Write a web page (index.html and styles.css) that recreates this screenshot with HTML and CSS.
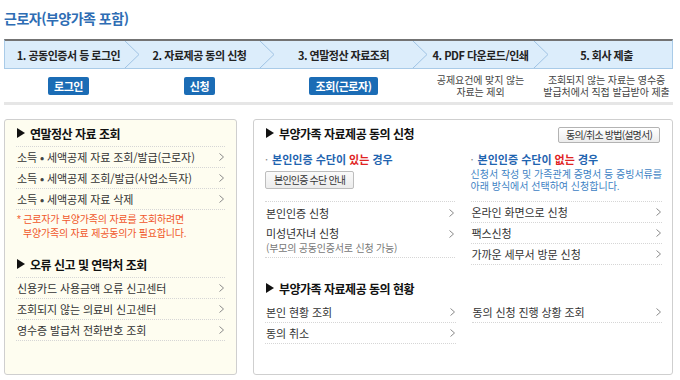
FILE: index.html
```html
<!DOCTYPE html>
<html lang="ko">
<head>
<meta charset="utf-8">
<title>근로자(부양가족 포함)</title>
<link rel="stylesheet" href="styles.css">
</head>
<body>
<div class="page">
  <h1 class="title">근로자(부양가족 포함)</h1>

  <div class="steps">
    <div class="step">1. 공동인증서 등 로그인<svg class="chev" viewBox="0 0 16 28" preserveAspectRatio="none"><polyline points="0,-1 15,14 0,29"/></svg></div>
    <div class="step">2. 자료제공 동의 신청<svg class="chev" viewBox="0 0 16 28" preserveAspectRatio="none"><polyline points="0,-1 15,14 0,29"/></svg></div>
    <div class="step">3. 연말정산 자료조회<svg class="chev" viewBox="0 0 16 28" preserveAspectRatio="none"><polyline points="0,-1 15,14 0,29"/></svg></div>
    <div class="step">4. PDF 다운로드/인쇄<svg class="chev" viewBox="0 0 16 28" preserveAspectRatio="none"><polyline points="0,-1 15,14 0,29"/></svg></div>
    <div class="step">5. 회사 제출</div>
  </div>

  <div class="actions">
    <div class="act"><span class="btn-blue">로그인</span></div>
    <div class="act"><span class="btn-blue">신청</span></div>
    <div class="act"><span class="btn-blue">조회(근로자)</span></div>
    <div class="act desc">공제요건에 맞지 않는<br>자료는 제외</div>
    <div class="act desc">조회되지 않는 자료는 영수증<br>발급처에서 직접 발급받아 제출</div>
  </div>

  <div class="sep"></div>

  <div class="panels">
    <div class="panel left">
      <div class="head">연말정산 자료 조회</div>
      <ul class="links top">
        <li><span>소득 <b class="dot">•</b> 세액공제 자료 조회/발급(근로자)</span><svg class="arr" viewBox="0 0 5 8"><polyline points="0.5,0.5 4.5,4 0.5,7.5"/></svg></li>
        <li><span>소득 <b class="dot">•</b> 세액공제 조회/발급(사업소득자)</span><svg class="arr" viewBox="0 0 5 8"><polyline points="0.5,0.5 4.5,4 0.5,7.5"/></svg></li>
        <li><span>소득 <b class="dot">•</b> 세액공제 자료 삭제</span><svg class="arr" viewBox="0 0 5 8"><polyline points="0.5,0.5 4.5,4 0.5,7.5"/></svg></li>
      </ul>
      <p class="note">* 근로자가 부양가족의 자료를 조회하려면<br>부양가족의 자료 제공동의가 필요합니다.</p>

      <div class="head gap">오류 신고 및 연락처 조회</div>
      <ul class="links top">
        <li><span>신용카드 사용금액 오류 신고센터</span><svg class="arr" viewBox="0 0 5 8"><polyline points="0.5,0.5 4.5,4 0.5,7.5"/></svg></li>
        <li><span>조회되지 않는 의료비 신고센터</span><svg class="arr" viewBox="0 0 5 8"><polyline points="0.5,0.5 4.5,4 0.5,7.5"/></svg></li>
        <li><span>영수증 발급처 전화번호 조회</span><svg class="arr" viewBox="0 0 5 8"><polyline points="0.5,0.5 4.5,4 0.5,7.5"/></svg></li>
      </ul>
    </div>

    <div class="panel right">
      <div class="rhead">
        <div class="head">부양가족 자료제공 동의 신청</div>
        <span class="btn-gray">동의/취소 방법(설명서)</span>
      </div>

      <div class="cols">
        <div class="col">
          <div class="sub">본인인증 수단이 <em>있는</em> 경우</div>
          <span class="btn-gray tall">본인인증 수단 안내</span>
          <ul class="links top">
            <li class="nob"><span>본인인증 신청</span><svg class="arr" viewBox="0 0 5 8"><polyline points="0.5,0.5 4.5,4 0.5,7.5"/></svg></li>
            <li class="multi"><span>미성년자녀 신청<br><small>(부모의 공동인증서로 신청 가능)</small></span><svg class="arr" viewBox="0 0 5 8"><polyline points="0.5,0.5 4.5,4 0.5,7.5"/></svg></li>
          </ul>
        </div>
        <div class="col">
          <div class="sub">본인인증 수단이 <em>없는</em> 경우</div>
          <p class="rnote">신청서 작성 및 가족관계 증명서 등 증빙서류를<br>아래 방식에서 선택하여 신청합니다.</p>
          <ul class="links top">
            <li><span>온라인 화면으로 신청</span><svg class="arr" viewBox="0 0 5 8"><polyline points="0.5,0.5 4.5,4 0.5,7.5"/></svg></li>
            <li><span>팩스신청</span><svg class="arr" viewBox="0 0 5 8"><polyline points="0.5,0.5 4.5,4 0.5,7.5"/></svg></li>
            <li><span>가까운 세무서 방문 신청</span><svg class="arr" viewBox="0 0 5 8"><polyline points="0.5,0.5 4.5,4 0.5,7.5"/></svg></li>
          </ul>
        </div>
      </div>

      <div class="head gap2">부양가족 자료제공 동의 현황</div>
      <div class="cols">
        <ul class="links">
          <li><span>본인 현황 조회</span><svg class="arr" viewBox="0 0 5 8"><polyline points="0.5,0.5 4.5,4 0.5,7.5"/></svg></li>
          <li><span>동의 취소</span><svg class="arr" viewBox="0 0 5 8"><polyline points="0.5,0.5 4.5,4 0.5,7.5"/></svg></li>
        </ul>
        <ul class="links">
          <li><span>동의 신청 진행 상황 조회</span><svg class="arr" viewBox="0 0 5 8"><polyline points="0.5,0.5 4.5,4 0.5,7.5"/></svg></li>
        </ul>
      </div>
    </div>
  </div>
</div>
</body>
</html>
```

FILE: styles.css
```css
body {
  margin: 0;
  background: #fff;
  color: #333;
  font-family: "Noto Sans CJK KR", "Noto Sans", sans-serif;
}

.page {
  width: 669px;
  margin-left: 4px;
}

.title {
  margin: 8px 0 11px;
  font-size: 14px;
  line-height: 20px;
  font-weight: bold;
  color: #2e6db4;
  letter-spacing: -0.5px;
}

/* step bar */
.steps {
  display: grid;
  grid-template-columns: 127px 135px 153px 121px 131px;
  box-sizing: border-box;
  height: 30px;
  background: #dcedfb;
  border: 1px solid #a9cbe8;
  border-top: 2px solid #737373;
}

.step {
  position: relative;
  display: flex;
  align-items: center;
  justify-content: center;
  font-size: 11px;
  font-weight: bold;
  color: #222;
  letter-spacing: -0.5px;
  white-space: nowrap;
}

.chev {
  position: absolute;
  top: 0;
  right: -8px;
  width: 16px;
  height: 100%;
  z-index: 1;
  fill: none;
  stroke: #9fc3e3;
  stroke-width: 1;
}

.actions {
  display: grid;
  grid-template-columns: 127px 135px 153px 121px 131px;
  box-sizing: border-box;
  height: 33px;
  padding: 8px 1px 0;
  align-items: start;
}

.act {
  display: flex;
  justify-content: center;
}

.btn-blue {
  display: inline-block;
  height: 18px;
  line-height: 18px;
  padding: 0 6px;
  background: #1b6cb5;
  border-radius: 2px;
  color: #fff;
  font-size: 11px;
  font-weight: bold;
  letter-spacing: -0.4px;
}

.desc {
  margin-top: -2px;
  text-align: center;
  font-family: "Liberation Sans", "Noto Sans CJK KR", sans-serif;
  font-size: 10px;
  line-height: 12px;
  color: #444;
  letter-spacing: -0.1px;
  white-space: nowrap;
}

.sep {
  height: 3px;
  background: #e6e6e6;
}

/* panels */
.panels {
  display: flex;
  gap: 16px;
  margin-top: 14px;
}

.panel {
  box-sizing: border-box;
  height: 256px;
  padding: 2px 11px 0;
  border: 1px solid #cfcfcf;
  border-radius: 3px;
}

.left {
  width: 233px;
  flex: none;
  background: #fefdf0;
}

.right {
  flex: 1;
  padding-right: 10px;
  background: #fff;
}

.head {
  display: flex;
  align-items: center;
  height: 22px;
  padding: 0 0 2px 1px;
  font-size: 12px;
  font-weight: bold;
  color: #111;
  letter-spacing: -0.5px;
  white-space: nowrap;
}

.head::before {
  content: "";
  width: 0;
  height: 0;
  border-left: 8px solid #111;
  border-top: 5px solid transparent;
  border-bottom: 5px solid transparent;
  margin-right: 5px;
}

.head.gap {
  margin-top: 12px;
}

.head.gap2 {
  margin-top: 12px;
  padding-bottom: 3px;
}

.links {
  list-style: none;
  margin: 0;
  padding: 0;
}

.links.top {
  border-top: 1px dotted #d6d6d6;
}

.links li {
  display: flex;
  justify-content: space-between;
  align-items: center;
  box-sizing: border-box;
  height: 21px;
  padding-left: 1px;
  border-bottom: 1px dotted #d6d6d6;
  font-size: 11px;
  color: #333;
  letter-spacing: -0.1px;
  white-space: nowrap;
}

.links .dot {
  font-weight: bold;
  color: #444;
}

.links li.nob {
  border-bottom: none;
}

.links li.multi {
  height: auto;
  align-items: flex-start;
  padding-top: 3px;
  padding-bottom: 2px;
  line-height: 14px;
}

.links li.multi .arr {
  margin-top: 4px;
}

.links small {
  font-size: 10px;
  color: #777;
  letter-spacing: -0.2px;
}

.arr {
  width: 5px;
  height: 8px;
  margin-right: 1px;
  fill: none;
  stroke: #8a8a8a;
  stroke-width: 1;
  flex: none;
}

.note {
  margin: 3px 0 0;
  padding-left: 7px;
  text-indent: -6px;
  font-family: "Liberation Sans", "Noto Sans CJK KR", sans-serif;
  font-size: 10px;
  line-height: 14px;
  color: #f0572a;
  letter-spacing: -0.2px;
  white-space: nowrap;
}

/* right panel */
.rhead {
  display: flex;
  justify-content: space-between;
  align-items: flex-start;
}

.btn-gray {
  display: inline-block;
  box-sizing: border-box;
  height: 16px;
  line-height: 14px;
  margin: 5px 2px 0 0;
  padding: 0 7px;
  border: 1px solid #b3b3b3;
  border-radius: 2px;
  background: linear-gradient(#ffffff, #ececec);
  font-size: 10px;
  color: #333;
  letter-spacing: -0.8px;
  white-space: nowrap;
}

.btn-gray.tall {
  height: 18px;
  line-height: 16px;
  margin: 3px 0 12px;
  padding: 0 8px;
  background: linear-gradient(#fafafa, #ececec);
  border-color: #bdbdbd;
}

.cols {
  display: grid;
  grid-template-columns: 1fr 1fr;
  column-gap: 16px;
}

.col {
  display: flex;
  flex-direction: column;
  align-items: flex-start;
}

.col .links {
  align-self: stretch;
}

.sub {
  margin-top: 4px;
  height: 18px;
  line-height: 18px;
  font-size: 11px;
  font-weight: bold;
  color: #1f64b0;
  letter-spacing: 0;
  white-space: nowrap;
}

.sub::before {
  content: "·";
  color: #888;
  font-weight: normal;
  margin-right: 4px;
}

.sub em {
  font-style: normal;
  color: #e02323;
}

.rnote {
  margin: 1px 0 8px;
  font-family: "Liberation Sans", "Noto Sans CJK KR", sans-serif;
  font-size: 10px;
  line-height: 12px;
  color: #3d82c4;
  letter-spacing: 0;
  white-space: nowrap;
}
```
